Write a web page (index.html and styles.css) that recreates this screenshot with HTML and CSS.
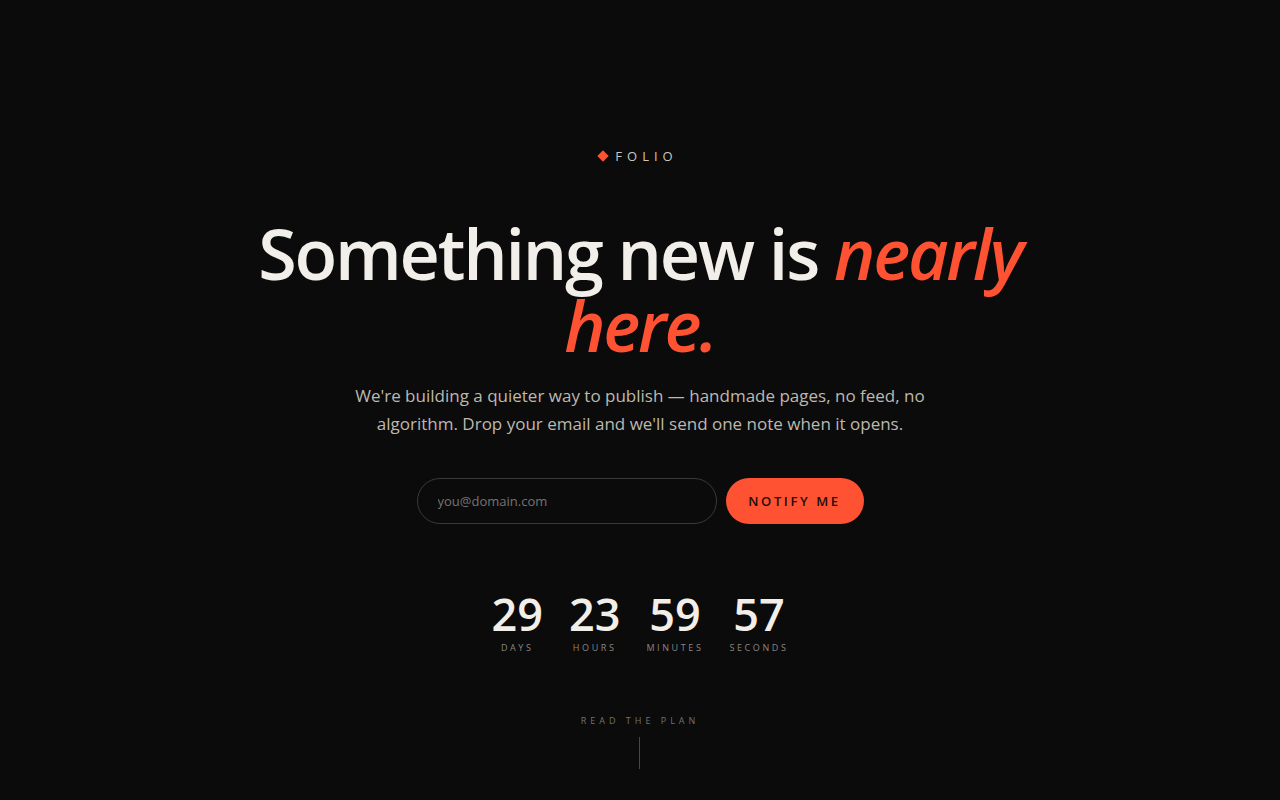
FILE: index.html
```html
<!DOCTYPE html>
<html lang="en">
<head>
<meta charset="utf-8">
<title>Folio — Coming soon</title>
<link rel="stylesheet" href="styles.css">
</head>
<body>
<main class="page">
  <div class="brand"><span class="brand-mark"></span><span class="brand-name">FOLIO</span></div>
  <h1 class="headline">Something new is <em>nearly here.</em></h1>
  <p class="lede">We're building a quieter way to publish — handmade pages, no feed, no algorithm. Drop your email and we'll send one note when it opens.</p>
  <form class="signup" onsubmit="return false">
    <input class="email" type="email" placeholder="you@domain.com">
    <button class="notify" type="submit">NOTIFY ME</button>
  </form>
  <div class="countdown">
    <div class="unit"><span class="num">29</span><span class="label">DAYS</span></div>
    <div class="unit"><span class="num">23</span><span class="label">HOURS</span></div>
    <div class="unit"><span class="num">59</span><span class="label">MINUTES</span></div>
    <div class="unit"><span class="num">57</span><span class="label">SECONDS</span></div>
  </div>
  <a class="plan" href="#plan"><span class="plan-text">READ THE PLAN</span><span class="plan-line"></span></a>
</main>
</body>
</html>
```
FILE: styles.css
```css
* { box-sizing: border-box; }
html, body { margin: 0; padding: 0; }
body {
  background: #0b0b0b;
  color: #f2efea;
  font-family: "Open Sans", "Noto Sans", sans-serif;
  height: 800px;
  overflow: hidden;
}
.page {
  display: flex;
  flex-direction: column;
  align-items: center;
  padding-top: 146px;
}
.brand {
  display: flex;
  align-items: center;
  gap: 8px;
  height: 20px;
  margin-left: -3px;
}
.brand-mark {
  width: 8px;
  height: 8px;
  background: #ff5233;
  transform: rotate(45deg);
}
.brand-name {
  font-size: 13px;
  letter-spacing: 5px;
  color: #cbc6bd;
}
.headline {
  margin: 51px 0 0;
  font-size: 70px;
  font-weight: 600;
  line-height: 72px;
  letter-spacing: -2.2px;
  text-align: center;
  width: 820px;
  color: #f2efea;
}
.headline em {
  color: #ff5233;
  font-style: italic;
}
.lede {
  margin: 21px 0 0;
  width: 600px;
  text-align: center;
  font-size: 17px;
  line-height: 28px;
  color: #bdb8b0;
}
.signup {
  display: flex;
  gap: 9px;
  margin-top: 40px;
}
.email {
  width: 300px;
  height: 46px;
  border-radius: 23px;
  border: 1px solid #3a3a3a;
  background: #0b0b0b;
  padding: 0 20px;
  font-family: inherit;
  font-size: 13px;
  color: #eee;
  outline: none;
}
.email::placeholder { color: #77746f; }
.notify {
  width: 138px;
  height: 46px;
  border-radius: 23px;
  border: none;
  background: #ff5233;
  color: #1a0d09;
  font-family: inherit;
  font-size: 13px;
  font-weight: 600;
  letter-spacing: 2.6px;
  cursor: pointer;
}
.countdown {
  display: flex;
  gap: 26px;
  margin-top: 67px;
}
.unit {
  display: flex;
  flex-direction: column;
  align-items: center;
}
.num {
  font-size: 45px;
  font-weight: 600;
  line-height: 45px;
  color: #f2efea;
}
.label {
  margin-top: 6px;
  font-size: 9px;
  line-height: 12px;
  letter-spacing: 2.6px;
  color: #8a8680;
}
.plan {
  display: flex;
  flex-direction: column;
  align-items: center;
  margin-top: 60px;
  text-decoration: none;
}
.plan-text {
  font-size: 9px;
  letter-spacing: 4px;
  color: #74726e;
}
.plan-line {
  margin-top: 10px;
  width: 1px;
  height: 32px;
  background: #4a4844;
}
```
